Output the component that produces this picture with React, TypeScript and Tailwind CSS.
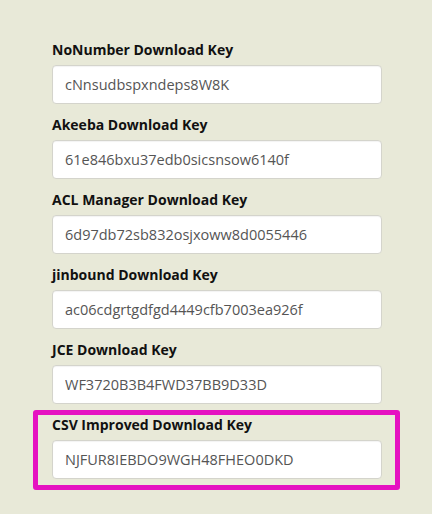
import React from 'react';

const keys = [
  { label: 'NoNumber Download Key', value: 'cNnsudbspxndeps8W8K' },
  { label: 'Akeeba Download Key', value: '61e846bxu37edb0sicsnsow6140f' },
  { label: 'ACL Manager Download Key', value: '6d97db72sb832osjxoww8d0055446' },
  { label: 'jinbound Download Key', value: 'ac06cdgrtgdfgd4449cfb7003ea926f' },
  { label: 'JCE Download Key', value: 'WF3720B3B4FWD37BB9D33D' },
];

const KeyField: React.FC<{ label: string; value: string }> = ({ label, value }) => (
  <>
    <label className="block text-[14px] leading-5 font-bold text-[#111] mb-[5px]">{label}</label>
    <input
      readOnly
      value={value}
      className="block w-[330px] h-[39px] px-3 bg-white border border-[#d4d4cc] rounded-[4px] text-[14.5px] text-[#555] shadow-[inset_0_1px_1px_rgba(0,0,0,0.05)] outline-none"
    />
  </>
);

const App: React.FC = () => {
  return (
    <div
      className="w-[432px] h-[514px] bg-[#e8e9d8] pt-10 pl-[52px] overflow-hidden"
      style={{ fontFamily: '"Open Sans", "Liberation Sans", sans-serif' }}
    >
      {keys.map((k) => (
        <div key={k.label} className="mb-[11px]">
          <KeyField label={k.label} value={k.value} />
        </div>
      ))}
      <div className="w-[367px] -ml-[19px] -mt-[5px] border-[5px] border-[#e512c1] rounded-[3px] pl-[14px] pr-[13px] pb-[6px]">
        <KeyField label="CSV Improved Download Key" value="NJFUR8IEBDO9WGH48FHEO0DKD" />
      </div>
    </div>
  );
};

export default App;
